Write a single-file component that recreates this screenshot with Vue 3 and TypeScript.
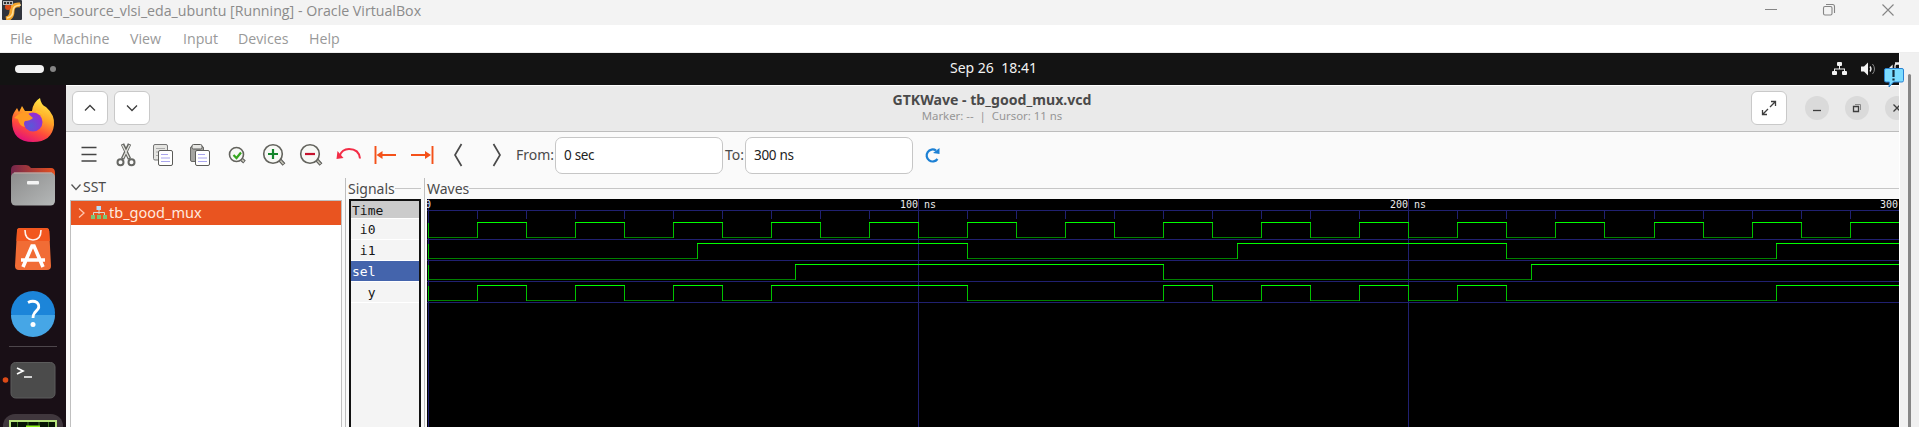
<script setup lang="ts">
interface Signal { name: string; edges: number[]; selected?: boolean }

const menus = ['File', 'Machine', 'View', 'Input', 'Devices', 'Help']
const signals: Signal[] = [
  { name: ' i0', edges: Array.from({ length: 29 }, (_, i) => (i + 1) * 10) },
  { name: ' i1', edges: [55, 110, 165, 220, 275] },
  { name: 'sel', edges: [75, 150, 225], selected: true },
  { name: '  y', edges: [10, 20, 30, 40, 50, 60, 70, 110, 150, 160, 170, 180, 190, 200, 210, 220, 275] },
]

const END = 1472
const xAt = (ns: number): number => Math.floor(ns * 4.904) + 1.5
const ticks = Array.from({ length: 30 }, (_, i) => xAt(i * 10))

const waves = signals.map((s, row) => {
  const hi = 23.5 + row * 21
  const lo = hi + 15
  let high = ''
  let low = ''
  let edge = `M1.5 ${hi}V${lo}`
  let from = 1.5
  s.edges.forEach((t, i) => {
    const x = xAt(t)
    if (i % 2) high += `M${from - 0.5} ${hi}H${x + 0.5}`
    else low += `M${from} ${lo}H${x}`
    edge += `M${x} ${hi}V${lo + 0.5}`
    from = x
  })
  if (s.edges.length % 2) high += `M${from - 0.5} ${hi}H${END}`
  else low += `M${from} ${lo}H${END}`
  return { high, low, edge, base: lo + 2 }
})
</script>

<template>
  <div class="screen">
    <header class="titlebar">
      <svg class="appicon" width="20" height="20" viewBox="0 0 20 20">
        <rect width="20" height="20" rx="1" fill="#30343c" />
        <path d="M4 19Q10 18 10 11T18 5" fill="none" stroke="#f6a62c" stroke-width="5" />
        <path d="M5 18Q11 17 11 11T19 5" fill="none" stroke="#ffe09a" stroke-width="1.5" />
        <circle cx="6" cy="7" r="3" fill="#d84a17" />
        <path d="M1 1h10v4H1z" fill="#b9b9bc" /><path d="M2 3h2m1 0h2m1 0h2" stroke="#333" stroke-width="2" />
      </svg>
      <span class="wintitle">open_source_vlsi_eda_ubuntu [Running] - Oracle VirtualBox</span>
      <svg class="winbtns" width="140" height="25" viewBox="0 0 140 25" fill="none" stroke="#858585" stroke-width="1.1">
        <path d="M5 9.500h12M122.500 4.500l11 11m0-11l-11 11" />
        <rect x="63.500" y="6.500" width="8.500" height="8.500" rx="1.500" /><path d="M66 4.500h6.500q2 0 2 2V13" />
      </svg>
    </header>
    <nav class="menubar">
      <span v-for="m in menus" :key="m">{{ m }}</span>
    </nav>

    <div class="body">
      <div class="guest">
        <div class="panel">
          <i class="pill"></i><i class="dot"></i>
          <span class="clock">Sep 26&nbsp; 18:41</span>
          <svg class="tray" width="70" height="32" viewBox="0 0 70 32">
            <g fill="#f2f2f2">
              <rect x="8" y="9" width="5" height="4" rx="1" /><rect x="3" y="18" width="5" height="4" rx="1" /><rect x="13" y="18" width="5" height="4" rx="1" />
              <path d="M10 13h1v2.500h5v3h-1v-2H6v2H5v-3h5z" />
              <path d="M32 13.500h3l4-4v13l-4-4h-3z" />
            </g>
            <g fill="none" stroke="#eee"><path d="M41 13.500q2 2.500 0 5" stroke-width="1.300" /><path d="M43.500 11q4 5 0 10" stroke="#888" /><path d="M66 17v-4q0-2 2-2h2M66 10h4M60 16l3-3v5" stroke-width="1.300" /></g>
          </svg>
        </div>

        <div class="desktop">
          <aside class="dock">
            <svg width="66" height="342" viewBox="0 85 66 342">
              <defs>
                <linearGradient id="ff" x1=".75" y1="0" x2=".3" y2="1"><stop offset="0" stop-color="#fff04a" /><stop offset=".4" stop-color="#ffa526" /><stop offset=".7" stop-color="#ff4a3c" /><stop offset="1" stop-color="#e2107c" /></linearGradient>
                <radialGradient id="ffc" cx=".4" cy=".7" r=".7"><stop offset="0" stop-color="#5a58d8" /><stop offset="1" stop-color="#9a2ad2" /></radialGradient>
                <linearGradient id="fold" x2="1"><stop offset="0" stop-color="#74264c" /><stop offset="1" stop-color="#e6511f" /></linearGradient>
                <linearGradient id="gray" x2="1" y2="1"><stop offset="0" stop-color="#8c8c8c" /><stop offset="1" stop-color="#b5b8b8" /></linearGradient>
              </defs>
              <path d="M15 111l2-3 2 4 3-6 3 5q3 0 7 0Q33 102 40 98q1 7 6 9 9 8 8 18-2 17-21 17-21 0-21-21 0-6 3-10z" fill="url(#ff)" />
              <circle cx="33" cy="122" r="9.500" fill="url(#ffc)" />
              <path d="M14 118q7-7 13-6 2 3 6 6-3 3-8 3-2 2 0 6-6-1-7-8z" fill="#ff9b24" />
              <path d="M36 110q8 1 9 10-1-8-9-8z" fill="#ffc52c" />
              <path d="M11 170q0-5 5-5h10q3 0 5 3h20q4 0 4 5v16H11z" fill="url(#fold)" />
              <rect x="11" y="172.500" width="44" height="33" rx="4.500" fill="url(#gray)" /><path d="M14 173h38" stroke="#c9a9a4" />
              <rect x="27" y="181" width="12" height="3.500" rx="1" fill="#f4f4f4" />
              <path d="M20 228h26q3 0 3.200 3L51 266q0 4-4 4H19q-4 0-4-4l2-35q0-3 3-3z" fill="#f16c35" />
              <path d="M20 228h26q3 0 3.200 3l.6 10H16.500l.5-10q0-3 3-3z" fill="#f2571f" />
              <path d="M25 230q0 10 8 10t8-10" fill="none" stroke="#fff3ee" stroke-width="1.600" />
              <path d="M23 267l9-21h2l9 21M21 260h24" fill="none" stroke="#fff" stroke-width="3.600" />
              <circle cx="33" cy="313" r="22" fill="#1c85d9" /><path d="M11 315h44a22 22 0 0 1-44 0z" fill="#46a6e6" />
              <path d="M28 302.500q5-2.500 9 0 3 3 1 6.500l-3.500 4q-1.500 2-1.500 5" fill="none" stroke="#fff" stroke-width="2.800" /><circle cx="33" cy="324.500" r="2.500" fill="#fff" />
              <path d="M9 346.500h48" stroke="#4d464b" />
              <rect x="11" y="362.500" width="44" height="35.500" rx="4.500" fill="#4b4b4b" stroke="#5c5c5c" />
              <path d="M17 368l6 3-6 3M24 377h8" fill="none" stroke="#fff" stroke-width="1.700" />
              <circle cx="5.500" cy="380" r="2.800" fill="#dc4a17" />
              <rect x="3" y="414" width="60" height="40" rx="12" fill="#40373d" />
              <rect x="9" y="420" width="48" height="30" fill="#b8e47e" /><rect x="11" y="422" width="44" height="20" fill="#071405" />
              <path d="M17.500 422v5M28 422v5M39 422v5M48.500 422v5" stroke="#3c7420" /><path d="M26 426.500h14" stroke="#8ff41b" stroke-width="2" />
            </svg>
          </aside>

          <main class="gtk">
            <div class="headerbar">
              <button class="hb"><svg width="12" height="8" viewBox="0 0 12 8"><path d="M1 6.500l5-5 5 5" /></svg></button>
              <button class="hb"><svg width="12" height="8" viewBox="0 0 12 8"><path d="M1 1.500l5 5 5-5" /></svg></button>
              <div class="titles"><b>GTKWave - tb_good_mux.vcd</b><small>Marker: --&nbsp; |&nbsp; Cursor: 11 ns</small></div>
              <button class="hb full"><svg width="16" height="16" viewBox="0 0 16 16"><path d="M9 7l5-5M10 1.500h4.500V6M7 9l-5 5M1.500 10v4.500H6" /></svg></button>
              <i class="wb"><svg width="24" height="24" viewBox="0 0 24 24"><path d="M8 14.500h8" /></svg></i>
              <i class="wb"><svg width="24" height="24" viewBox="0 0 24 24"><path d="M8.500 10.500h5v5h-5z" /><path d="M10 8.500h5.500V14" class="back" /></svg></i>
              <i class="wb"><svg width="24" height="24" viewBox="0 0 24 24"><path d="M8.500 8.500l7 7m0-7l-7 7" /></svg></i>
            </div>

            <div class="toolbar">
              <svg class="tools" width="440" height="46" viewBox="70 132 440 46" fill="none" stroke="#5b5b58">
                <path d="M81.500 147.500h15M81.500 154.500h15M81.500 161h15" stroke="#444" stroke-width="1.500" />
                <g stroke="#666763"><path d="M122.500 144l7 15M129.500 144l-7 15" stroke-width="3.600" /><path d="M122.500 145l6.500 13M129.500 145l-6.500 13" stroke="#e4e4e0" stroke-width="1.300" /><circle cx="120.500" cy="162.300" r="3" stroke-width="2" /><circle cx="131.500" cy="162.300" r="3" stroke-width="2" /></g>
                <g><rect x="153.500" y="144.500" width="14" height="15.500" rx="1.500" fill="#e5e5e2" stroke="#777" /><path d="M156 148.500h9M156 152h4M156 155.500h4" stroke="#aaa" /><rect x="158.500" y="150.500" width="14" height="15" rx="1.500" fill="#fff" /><path d="M161 154.500h7M161 158h9M161 161.500h9" stroke="#a9a5ed" /></g>
                <g><rect x="190.500" y="146.500" width="13" height="15" rx="1.500" fill="#a4a4a0" stroke="#696966" /><rect x="192" y="144.500" width="10" height="4.500" rx="1.500" fill="#e6e6e3" /><rect x="195.500" y="150.500" width="14" height="15" rx="1.500" fill="#fff" /><path d="M198 154.500h7M198 158h9M198 161.500h9" stroke="#a9a5ed" /></g>
                <g stroke-width="3.800"><path d="M240 158l4.500 4" /><path d="M279 159l5 5.500M316 159l5 5.500" /></g>
                <g stroke="#c3c3b6" stroke-width="1.700"><path d="M240 158l4 3.500M279 159l4.500 5M316 159l4.500 5" /></g>
                <g fill="#f7f8f5" stroke="#63635d" stroke-width="1.600"><circle cx="236.500" cy="154.500" r="7" /><circle cx="273" cy="154" r="9.300" /><circle cx="310" cy="154" r="9.300" /></g>
                <path d="M233.500 155l3 3 4.500-5.500" stroke="#35a61e" stroke-width="2.200" />
                <path d="M268 154h10M273 149v10" stroke="#12842a" stroke-width="2.200" /><path d="M305 154h10" stroke="#c6122d" stroke-width="2.200" />
                <path d="M339.500 156Q342 149 349 149q10 0 11 9.500" stroke="#f32c46" stroke-width="2" /><path d="M336.500 159l1-8 6 7z" fill="#f32c46" stroke="none" />
                <g stroke="#f45119" stroke-width="1.900"><path d="M375.500 146v18M379 155h17M432.500 146v18M411 155h17" /><path d="M376.500 155l6-4v8zM431 155l-6-4v8z" fill="#f45119" stroke="none" /></g>
                <path d="M461.500 144l-6.500 11 6.500 11M493.500 144l6.500 11-6.500 11" stroke="#4a4a4a" stroke-width="1.700" />
              </svg>
              <label class="from">From:</label><div class="entry">0 sec</div>
              <label class="to">To:</label><div class="entry">300 ns</div>
              <svg class="reload" width="18" height="18" viewBox="0 0 18 18"><path d="M13 4.500A6 6 0 1 0 14.500 13" fill="none" stroke="#1c80d4" stroke-width="2.200" /><path d="M10 7l6.500-5v6z" fill="#1c80d4" /></svg>
            </div>

            <div class="work">
              <section class="sst">
                <div class="ssthead"><svg width="12" height="8" viewBox="0 0 12 8"><path d="M1.500 1.500l4.500 5 4.500-5" fill="none" stroke="#555" stroke-width="1.300" /></svg><span>SST</span></div>
                <div class="tree">
                  <div class="node">
                    <svg width="36" height="24" viewBox="0 0 36 24">
                      <path d="M8 7.500l5 4.500-5 4.500" fill="none" stroke="#ffc5af" stroke-width="1.300" />
                      <path d="M28 9v4M22.500 14v-2.500h11V14" fill="none" stroke="#d5d8d3" />
                      <rect x="25.500" y="5" width="4.500" height="4" fill="#b9dcf7" /><path d="M20 14h4v4h-4zM26 14h4v4h-4zM32 14h4v4h-4z" fill="#7bc574" />
                    </svg><span>tb_good_mux</span>
                  </div>
                </div>
              </section>
              <section class="signals">
                <div class="legend"><span>Signals</span><i></i></div>
                <div class="siglist">
                  <div class="time">Time</div>
                  <div v-for="s in signals" :key="s.name" class="sig" :class="{ selected: s.selected }">{{ s.name }}</div>
                </div>
              </section>
              <section class="waves">
                <div class="legend"><span>Waves</span><i></i></div>
                <svg width="1472" height="228" viewBox="0 0 1472 228" fill="none" shape-rendering="crispEdges">
                  <rect width="1472" height="228" fill="#000" />
                  <g stroke="#202070"><path d="M0 11.500H1472" /><path v-for="t in ticks" :key="t" :d="`M${t} 12v8`" /><path d="M1.500 0V228M491.500 0V228" /><path :d="`M${xAt(200)} 0V228`" /></g>
                  <g v-for="w in waves" :key="w.base"><path :d="`M0 ${w.base}H1472`" stroke="#202070" /><path :d="w.low" stroke="#008000" /><path :d="w.edge" stroke="#00c000" /><path :d="w.high" stroke="#00ff00" /></g>
                  <g class="scale"><text x="-2" y="9">0</text><text x="473" y="9">100 ns</text><text x="963" y="9">200 ns</text><text x="1453" y="9">300</text></g>
                </svg>
              </section>
            </div>
          </main>
        </div>
      </div>
      <div class="gutter"><i></i></div>
    </div>
    <svg class="bubble" width="22" height="22" viewBox="0 0 22 22">
      <path d="M3 1.500h16q1.500 0 1.500 1.500v10.500q0 1.500-1.500 1.500h-8.500L6 20l.5-5H3q-1.500 0-1.500-1.500V3q0-1.500 1.500-1.500z" fill="#7bdcff" stroke="#2b83d2" />
      <path d="M10.500 3v7M10.500 11.500v2" stroke="#132b3c" stroke-width="2.200" />
    </svg>
  </div>
</template>

<style>
body { margin: 0; overflow: hidden; }
</style>
<style scoped>
* { box-sizing: border-box; }
svg { display: block; flex: none; }
span, b, small, label { white-space: pre; }
.screen { position: relative; width: 1919px; height: 427px; overflow: hidden; font: 15px/20px "Noto Sans", "Open Sans", sans-serif; color: #4a4a4a; }
.titlebar { display: flex; height: 25px; background: #f3f3f3; color: #8b8b8b; }
.appicon { margin-left: 2px; }
.wintitle { margin-left: 7px; font: 14.2px/22px "Open Sans", sans-serif; }
.winbtns { margin-left: auto; margin-right: 19px; }
.menubar { display: grid; grid-template-columns: 43px 77px 53px 55px 71px 60px; padding-left: 10px; height: 28px; background: #fff; color: #999; border-bottom: 1px solid #eee; font: 14.2px/27px "Open Sans", sans-serif; }
.body { display: flex; height: 374px; }
.guest { width: 1899px; overflow: hidden; flex: none; }
.panel { height: 32px; background: #131313; display: flex; align-items: center; color: #f2f2f2; }
.pill { width: 29px; height: 8px; border-radius: 4px; background: #f2f2f2; margin-left: 15px; }
.dot { width: 6px; height: 6px; border-radius: 50%; background: #858585; margin-left: 6px; }
.clock { margin-left: 894px; font-size: 14px; padding-bottom: 2px; }
.tray { margin-left: auto; }
.desktop { display: flex; height: 342px; }
.dock { width: 66px; flex: none; background: #190f16; }
.gtk { width: 1833px; flex: none; background: #fafafa; }
.headerbar { display: flex; width: 1846px; height: 47px; background: #eaeaea; border-top: 1px solid #fff; border-bottom: 1px solid #bdbdbd; padding: 5px 0 0 6px; }
.hb { width: 36px; height: 34px; padding: 0; margin-right: 6px; border: 1px solid #c9c9c9; border-radius: 6px; background: #fff; display: flex; align-items: center; justify-content: center; flex: none; }
.hb path, .wb path { fill: none; stroke: #3d3d3d; stroke-width: 1.3; }
.wb .back { stroke: #8a8a8a; stroke-width: 1; }
.titles { width: 240px; flex: none; margin-left: 716px; padding-top: 2px; display: flex; flex-direction: column; align-items: center; }
.titles b { font-size: 14.1px; line-height: 14px; }
.titles small { font-size: 11.4px; line-height: 18px; color: #969696; }
.hb.full { margin-left: 639px; margin-right: 18px; }
.wb { width: 24px; height: 24px; margin: 5px 16px 0 0; border-radius: 50%; background: #dadada; flex: none; }
.toolbar { display: flex; height: 46px; padding: 5px 0 0 4px; }
.tools { margin-top: -5px; }
.toolbar label { line-height: 36px; font-size: 14px; flex: none; }
.from { width: 39px; margin-left: 6px; }
.to { width: 20px; margin-left: 2px; }
.entry { width: 168px; height: 37px; border: 1px solid #c6c6c6; border-radius: 7px; background: #fff; padding-left: 8px; color: #222; font-size: 13.5px; letter-spacing: -.3px; line-height: 34px; flex: none; }
.reload { margin: 9px 0 0 10px; }
.work { display: flex; height: 249px; }
.sst { width: 280px; flex: none; padding-left: 4px; border-right: 1px solid #bebebe; }
.ssthead { display: flex; align-items: center; height: 22px; gap: 1px; line-height: 18px; font-size: 14px; padding-bottom: 4px; }
.tree { width: 272px; height: 240px; border: 1px solid #c0c0c0; background: #fff; }
.node { height: 24px; display: flex; background: #e95420; color: #ffe9df; line-height: 23px; font-size: 14.5px; gap: 2px; }
.legend { display: flex; align-items: center; height: 21px; line-height: 21px; font-size: 14px; }
.legend i { height: 1px; background: #c6c6c6; flex: 1; }
.signals { width: 79px; flex: none; padding: 0 3px; border-right: 1px solid #bebebe; }
.signals .legend span { margin-left: -1px; }
.siglist { height: 240px; border: 2px solid #111; background: #f4f4f4; font: 13px/20px "DejaVu Sans Mono", monospace; color: #161616; }
.time { height: 18px; background: #cbcbcb; border-bottom: 1px solid #fff; padding-left: 1px; line-height: 20px; }
.sig { height: 21px; padding-left: 1px; border-bottom: 1px solid #fff; line-height: 21px; white-space: pre; }
.sig.selected { background: #4464ac; color: #fff; }
.waves { padding-left: 2px; }
.scale { font: 10px "DejaVu Sans Mono", monospace; fill: #ededed; shape-rendering: auto; }
.gutter { width: 20px; background: #f0f0f0; border-left: 1px solid #fff; padding: 21px 0 0 8px; }
.gutter i { display: block; width: 3px; height: 353px; border-radius: 2px 2px 0 0; background: #868686; }
.bubble { position: absolute; left: 1883px; top: 67px; }
</style>
